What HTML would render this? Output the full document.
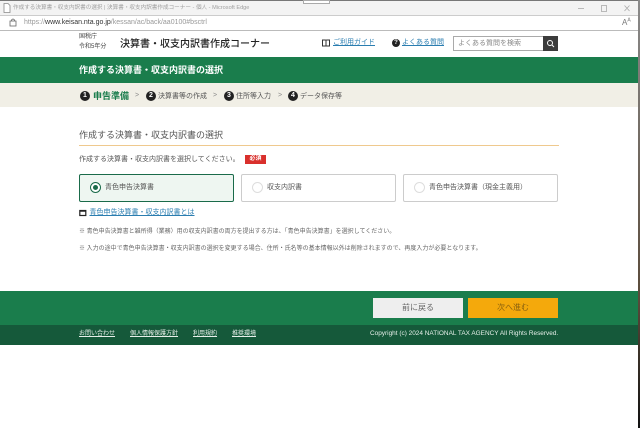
<!DOCTYPE html>
<html lang="ja">
<head>
<meta charset="utf-8">
<title>作成する決算書・収支内訳書の選択</title>
<style>
html,body{margin:0;padding:0;background:#fff}
body{width:640px;height:428px;position:relative;overflow:hidden;font-family:"Liberation Sans","Noto Sans CJK JP",sans-serif;color:#333}
#w{position:absolute;left:0;top:0;width:640px;height:428px;filter:blur(.3px)}
.a{position:absolute;white-space:nowrap}
.b{position:absolute}
.num{position:absolute;width:10px;height:10px;border-radius:50%;background:#222;color:#fff;font-size:7px;line-height:10px;text-align:center;font-weight:700}
.card{position:absolute;top:174px;height:28px;box-sizing:border-box;background:#fff;border:1px solid #ccc;border-radius:2px}
.rad{position:absolute;width:11px;height:11px;border-radius:50%;box-sizing:border-box;border:1px solid #ddd;background:#fff}
</style>
</head>
<body>
<div id="w">
<!-- browser chrome -->
<div class="b" style="left:0;top:0;width:638px;height:15px;background:#f3f3f3"></div>
<div class="b" style="left:0;top:0;width:638px;height:1px;background:#777"></div>
<div class="b" style="left:303px;top:0;width:27px;height:4px;box-sizing:border-box;background:#fff;border:1px solid #aaa"></div>
<div class="b" style="left:0;top:15px;width:638px;height:16px;background:#fff;border-top:1px solid #ccc;border-bottom:1px solid #bbb;box-sizing:border-box"></div>
<svg class="b" style="left:3px;top:3px" width="8" height="10" viewBox="0 0 8 10"><path d="M1 .5H5L7 2.500V9.500H1Z" fill="#fff" stroke="#888" stroke-width=".8"/></svg>
<div class="a" style="left:13px;top:3px;font-size:5.600px;line-height:10px;color:#a0a0a0">作成する決算書・収支内訳書の選択 | 決算書・収支内訳書作成コーナー - 個人 - Microsoft Edge</div>
<svg class="b" style="left:9px;top:18px" width="8" height="9" viewBox="0 0 8 9"><rect x="1" y="3" width="6" height="5" fill="none" stroke="#666" stroke-width=".8"/><path d="M2.500 3V2Q4 0 5.500 2V3" fill="none" stroke="#666" stroke-width=".8"/></svg>
<div class="a" style="left:24px;top:17px;font-size:7px;line-height:11px;color:#999">https://<span style="color:#333">www.keisan.nta.go.jp</span>/kessan/ac/back/aa0100#bsctrl</div>
<svg class="b" style="left:575px;top:4px" width="60" height="10" viewBox="0 0 60 10"><path d="M3 4.500H9" stroke="#aaa" stroke-width=".8"/><rect x="26.500" y="1.500" width="5" height="6" fill="none" stroke="#aaa" stroke-width=".8"/><path d="M49.500 1.500L54.500 7M54.500 1.500L49.500 7" stroke="#aaa" stroke-width=".8"/></svg>
<div class="a" style="left:622px;top:17px;font-size:8px;line-height:11px;color:#777">A<sup style="font-size:5px;line-height:0">A</sup></div>

<!-- header -->
<div class="a" style="left:79px;top:33px;font-size:6px;line-height:9px;color:#444">国税庁</div>
<div class="a" style="left:79px;top:43px;font-size:6px;line-height:9px;color:#444">令和5年分</div>
<div class="a" style="left:120px;top:37px;font-size:10px;line-height:15px;font-weight:500;color:#222">決算書・収支内訳書作成コーナー</div>
<svg class="b" style="left:322px;top:39px" width="8" height="8" viewBox="0 0 8 8"><path d="M.5 1H3.500Q4 1 4 1.800V7H.5ZM7.500 1H4.500Q4 1 4 1.800V7H7.500Z" fill="none" stroke="#333" stroke-width="1"/></svg>
<div class="a" style="left:333px;top:37px;font-size:7px;line-height:11px;color:#2a7db0;text-decoration:underline">ご利用ガイド</div>
<div class="b" style="left:392px;top:39px;width:8px;height:8px;border-radius:50%;background:#222;color:#fff;font-size:6px;line-height:8px;text-align:center;font-weight:700">?</div>
<div class="a" style="left:402px;top:37px;font-size:7px;line-height:11px;color:#2a7db0;text-decoration:underline">よくある質問</div>
<div class="b" style="left:453px;top:36px;width:90px;height:15px;box-sizing:border-box;border:1px solid #aaa;border-right:0;background:#fff"></div>
<div class="a" style="left:458px;top:38px;font-size:7px;line-height:11px;color:#888">よくある質問を検索</div>
<div class="b" style="left:543px;top:36px;width:15px;height:15px;background:#3c3c3c"></div>
<svg class="b" style="left:546px;top:39px" width="9" height="9" viewBox="0 0 9 9"><circle cx="4" cy="4" r="2.500" fill="none" stroke="#fff" stroke-width="1"/><path d="M6 6L8 8" stroke="#fff" stroke-width="1"/></svg>

<!-- green title -->
<div class="b" style="left:0;top:57px;width:638px;height:26px;background:#1a7d4c"></div>
<div class="a" style="left:79px;top:63px;font-size:9px;line-height:14px;font-weight:700;color:#fff">作成する決算書・収支内訳書の選択</div>

<!-- steps -->
<div class="b" style="left:0;top:83px;width:638px;height:24px;background:#f1efe6"></div>
<div class="num" style="left:80px;top:91px">1</div>
<div class="a" style="left:93px;top:89px;font-size:9px;line-height:14px;font-weight:700;color:#1a7d4c">申告準備</div>
<div class="a" style="left:135px;top:90px;font-size:7px;line-height:12px;color:#888">&gt;</div>
<div class="num" style="left:146px;top:91px">2</div>
<div class="a" style="left:158px;top:91px;font-size:7px;line-height:11px;color:#555">決算書等の作成</div>
<div class="a" style="left:213px;top:90px;font-size:7px;line-height:12px;color:#888">&gt;</div>
<div class="num" style="left:224px;top:91px">3</div>
<div class="a" style="left:236px;top:91px;font-size:7px;line-height:11px;color:#555">住所等入力</div>
<div class="a" style="left:278px;top:90px;font-size:7px;line-height:12px;color:#888">&gt;</div>
<div class="num" style="left:288px;top:91px">4</div>
<div class="a" style="left:300px;top:91px;font-size:7px;line-height:11px;color:#555">データ保存等</div>

<!-- main -->
<div class="a" style="left:79px;top:128px;font-size:9px;line-height:14px;color:#555">作成する決算書・収支内訳書の選択</div>
<div class="b" style="left:79px;top:145px;width:480px;height:1px;background:#efc98e"></div>
<div class="a" style="left:79px;top:154px;font-size:7px;line-height:11px;color:#555">作成する決算書・収支内訳書を選択してください。</div>
<div class="b" style="left:245px;top:155px;width:21px;height:9px;background:#d9302c;color:#fff;font-size:6px;line-height:9px;text-align:center;font-weight:700">必須</div>

<div class="card" style="left:79px;width:155px;background:#eef6f1;border:1px solid #1a6b4a"></div>
<div class="b" style="left:90px;top:182px;width:11px;height:11px;border-radius:50%;box-sizing:border-box;border:1px solid #1a6b4a;background:#fff"></div>
<div class="b" style="left:93px;top:185px;width:5px;height:5px;border-radius:50%;background:#1a6b4a"></div>
<div class="a" style="left:105px;top:182px;font-size:7px;line-height:11px;color:#555">青色申告決算書</div>

<div class="card" style="left:241px;width:155px"></div>
<div class="rad" style="left:252px;top:182px"></div>
<div class="a" style="left:267px;top:182px;font-size:7px;line-height:11px;color:#555">収支内訳書</div>

<div class="card" style="left:403px;width:155px"></div>
<div class="rad" style="left:414px;top:182px"></div>
<div class="a" style="left:429px;top:182px;font-size:7px;line-height:11px;color:#555">青色申告決算書（現金主義用）</div>

<svg class="b" style="left:79px;top:209px" width="8" height="8" viewBox="0 0 8 8"><rect x=".8" y="1.500" width="6" height="5" fill="none" stroke="#222" stroke-width="1.200"/><path d="M.5 2H7" stroke="#222" stroke-width="1.500"/></svg>
<div class="a" style="left:89.500px;top:207px;font-size:7px;line-height:11px;color:#2a7db0;text-decoration:underline">青色申告決算書・収支内訳書とは</div>

<div class="a" style="left:79px;top:227px;font-size:6px;line-height:10px;color:#666">※ 青色申告決算書と雑所得（業務）用の収支内訳書の両方を提出する方は、「青色申告決算書」を選択してください。</div>
<div class="a" style="left:79px;top:244px;font-size:6px;line-height:10px;color:#666">※ 入力の途中で青色申告決算書・収支内訳書の選択を変更する場合、住所・氏名等の基本情報以外は削除されますので、再度入力が必要となります。</div>

<!-- footer -->
<div class="b" style="left:0;top:291px;width:638px;height:34px;background:#1a7d4c"></div>
<div class="b" style="left:0;top:325px;width:638px;height:20px;background:#15593a"></div>
<div class="b" style="left:373px;top:298px;width:90px;height:20px;background:#eeeeee;color:#666;font-size:8px;line-height:20px;text-align:center">前に戻る</div>
<div class="b" style="left:468px;top:298px;width:90px;height:20px;background:#f4a90c;color:#8a6210;font-size:8px;line-height:20px;text-align:center">次へ進む</div>
<div class="a" style="left:79px;top:329px;font-size:6px;line-height:10px;color:#e6efe9;text-decoration:underline">お問い合わせ</div>
<div class="a" style="left:130px;top:329px;font-size:6px;line-height:10px;color:#e6efe9;text-decoration:underline">個人情報保護方針</div>
<div class="a" style="left:193px;top:329px;font-size:6px;line-height:10px;color:#e6efe9;text-decoration:underline">利用規約</div>
<div class="a" style="left:232px;top:329px;font-size:6px;line-height:10px;color:#e6efe9;text-decoration:underline">推奨環境</div>
<div class="a" style="left:370px;top:329px;font-size:6.440px;line-height:10px;color:#e6efe9">Copyright (c) 2024 NATIONAL TAX AGENCY All Rights Reserved.</div>

<!-- right edge -->
<div class="b" style="left:638px;top:0;width:2px;height:428px;background:linear-gradient(#8a8a8a,#5a4a3a 70%,#111)"></div>
</div>
</body>
</html>
